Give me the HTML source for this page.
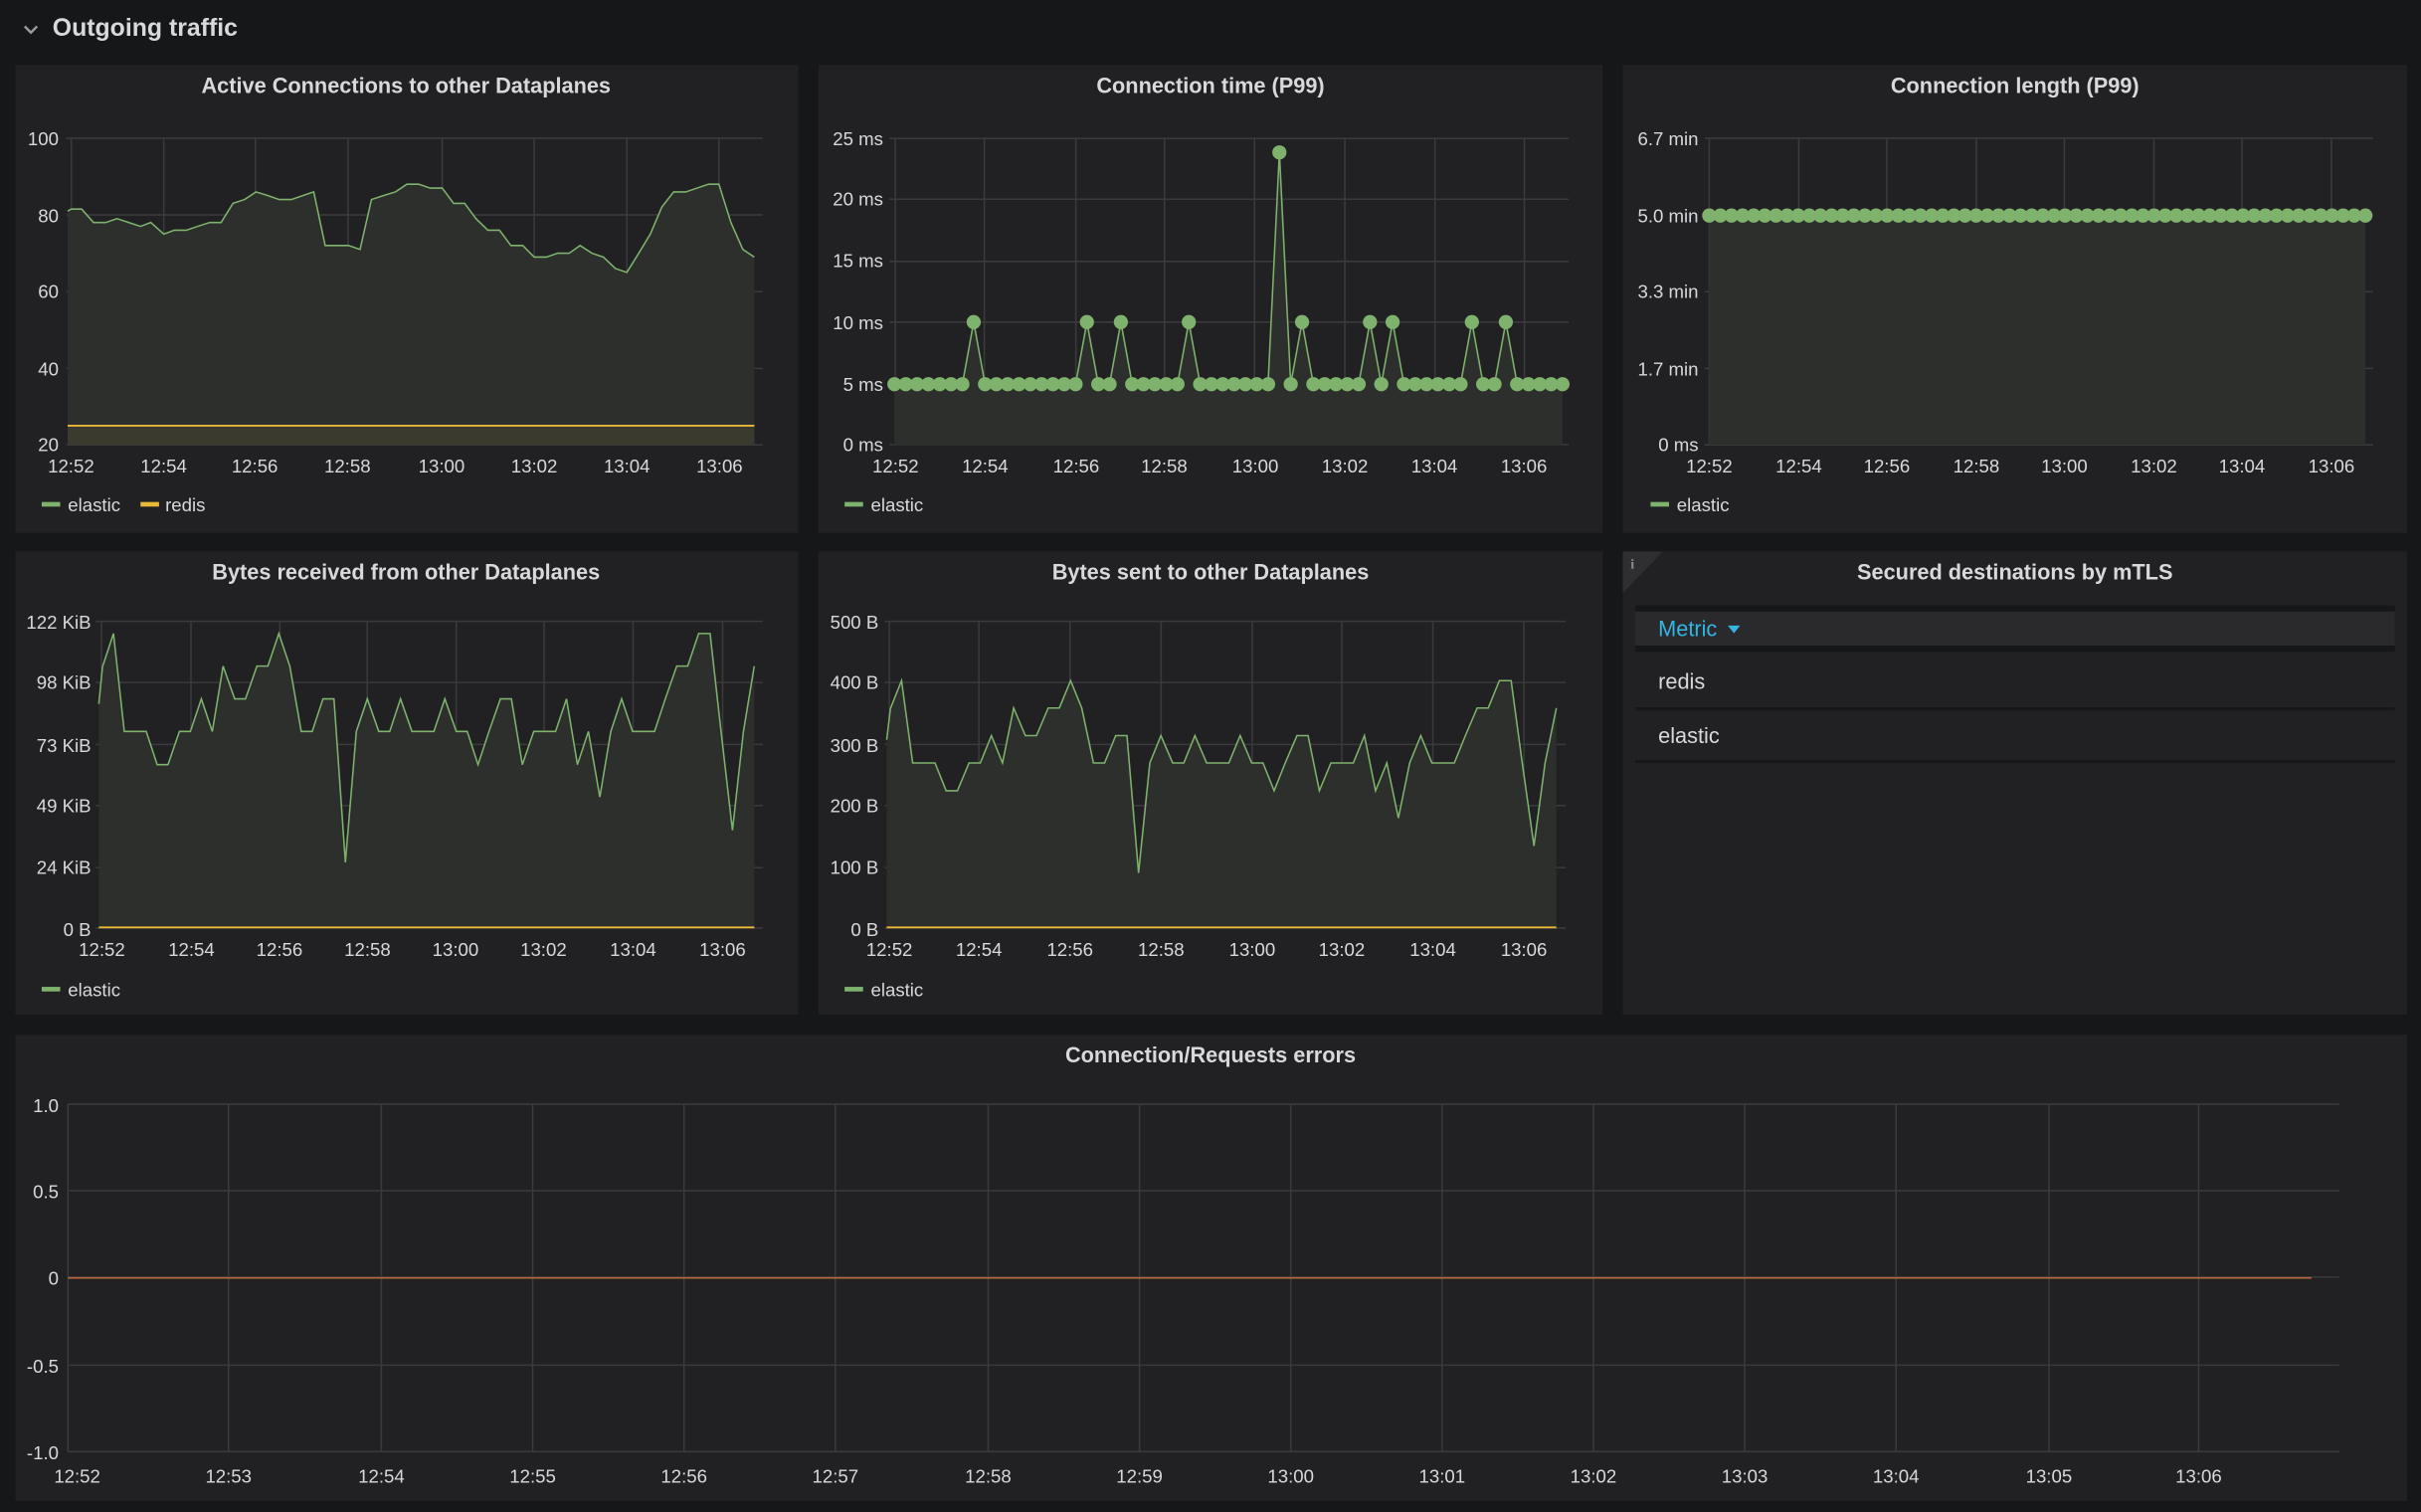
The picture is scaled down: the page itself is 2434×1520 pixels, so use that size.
<!DOCTYPE html>
<html><head><meta charset="utf-8"><style>
html,body{margin:0;padding:0;background:#161719;}
svg{display:block}
text{font-family:"Liberation Sans",sans-serif;fill:#d8d9da}
.t{font-weight:bold;font-size:14px;text-anchor:middle}
.ax{font-size:12px}
.r{text-anchor:end}
.m{text-anchor:middle}
</style></head><body>
<svg id="s" width="2434" height="1520" viewBox="0 0 1568 979" xmlns="http://www.w3.org/2000/svg">
<rect width="1568" height="979" fill="#161719"/>
<path d="M16 17 l4 4 l4 -4" stroke="#9a9a9c" stroke-width="1.6" fill="none"/>
<text x="34" y="23" style="font-size:16px;font-weight:bold">Outgoing traffic</text>

<rect x="10" y="42" width="507" height="303" fill="#212124"/>
<rect x="530" y="42" width="508" height="303" fill="#212124"/>
<rect x="1051" y="42" width="508" height="303" fill="#212124"/>
<rect x="10" y="357" width="507" height="300" fill="#212124"/>
<rect x="530" y="357" width="508" height="300" fill="#212124"/>
<rect x="1051" y="357" width="508" height="300" fill="#212124"/>
<rect x="10" y="670" width="1549" height="302" fill="#212124"/>

<g id="g"></g>

<text class="t" x="263" y="60">Active Connections to other Dataplanes</text>
<text class="t" x="784" y="60">Connection time (P99)</text>
<text class="t" x="1305" y="60">Connection length (P99)</text>
<text class="t" x="263" y="375">Bytes received from other Dataplanes</text>
<text class="t" x="784" y="375">Bytes sent to other Dataplanes</text>
<text class="t" x="1305" y="375">Secured destinations by mTLS</text>
<text class="t" x="784" y="688">Connection/Requests errors</text>

<g class="ax">
<text class="r" x="38" y="94">100</text><text class="r" x="38" y="144">80</text><text class="r" x="38" y="193">60</text><text class="r" x="38" y="243">40</text><text class="r" x="38" y="292">20</text>
<text class="m" x="46" y="306">12:52</text><text class="m" x="106" y="306">12:54</text><text class="m" x="165" y="306">12:56</text><text class="m" x="225" y="306">12:58</text><text class="m" x="286" y="306">13:00</text><text class="m" x="346" y="306">13:02</text><text class="m" x="406" y="306">13:04</text><text class="m" x="466" y="306">13:06</text>
<text x="44" y="331">elastic</text><text x="107" y="331">redis</text>

<text class="r" x="572" y="94">25 ms</text><text class="r" x="572" y="133">20 ms</text><text class="r" x="572" y="173">15 ms</text><text class="r" x="572" y="213">10 ms</text><text class="r" x="572" y="253">5 ms</text><text class="r" x="572" y="292">0 ms</text>
<text class="m" x="580" y="306">12:52</text><text class="m" x="638" y="306">12:54</text><text class="m" x="697" y="306">12:56</text><text class="m" x="754" y="306">12:58</text><text class="m" x="813" y="306">13:00</text><text class="m" x="871" y="306">13:02</text><text class="m" x="929" y="306">13:04</text><text class="m" x="987" y="306">13:06</text>
<text x="564" y="331">elastic</text>

<text class="r" x="1100" y="94">6.7 min</text><text class="r" x="1100" y="144">5.0 min</text><text class="r" x="1100" y="193">3.3 min</text><text class="r" x="1100" y="243">1.7 min</text><text class="r" x="1100" y="292">0 ms</text>
<text class="m" x="1107" y="306">12:52</text><text class="m" x="1165" y="306">12:54</text><text class="m" x="1222" y="306">12:56</text><text class="m" x="1280" y="306">12:58</text><text class="m" x="1337" y="306">13:00</text><text class="m" x="1395" y="306">13:02</text><text class="m" x="1452" y="306">13:04</text><text class="m" x="1510" y="306">13:06</text>
<text x="1086" y="331">elastic</text>

<text class="r" x="59" y="407">122 KiB</text><text class="r" x="59" y="446">98 KiB</text><text class="r" x="59" y="487">73 KiB</text><text class="r" x="59" y="526">49 KiB</text><text class="r" x="59" y="566">24 KiB</text><text class="r" x="59" y="606">0 B</text>
<text class="m" x="66" y="619">12:52</text><text class="m" x="124" y="619">12:54</text><text class="m" x="181" y="619">12:56</text><text class="m" x="238" y="619">12:58</text><text class="m" x="295" y="619">13:00</text><text class="m" x="352" y="619">13:02</text><text class="m" x="410" y="619">13:04</text><text class="m" x="468" y="619">13:06</text>
<text x="44" y="645">elastic</text>

<text class="r" x="569" y="407">500 B</text><text class="r" x="569" y="446">400 B</text><text class="r" x="569" y="487">300 B</text><text class="r" x="569" y="526">200 B</text><text class="r" x="569" y="566">100 B</text><text class="r" x="569" y="606">0 B</text>
<text class="m" x="576" y="619">12:52</text><text class="m" x="634" y="619">12:54</text><text class="m" x="693" y="619">12:56</text><text class="m" x="752" y="619">12:58</text><text class="m" x="811" y="619">13:00</text><text class="m" x="869" y="619">13:02</text><text class="m" x="928" y="619">13:04</text><text class="m" x="987" y="619">13:06</text>
<text x="564" y="645">elastic</text>

<text class="r" x="38" y="720">1.0</text><text class="r" x="38" y="776">0.5</text><text class="r" x="38" y="832">0</text><text class="r" x="38" y="889">-0.5</text><text class="r" x="38" y="945">-1.0</text>
<text class="m" x="50" y="960">12:52</text><text class="m" x="148" y="960">12:53</text><text class="m" x="247" y="960">12:54</text><text class="m" x="345" y="960">12:55</text><text class="m" x="443" y="960">12:56</text><text class="m" x="541" y="960">12:57</text><text class="m" x="640" y="960">12:58</text><text class="m" x="738" y="960">12:59</text><text class="m" x="836" y="960">13:00</text><text class="m" x="934" y="960">13:01</text><text class="m" x="1032" y="960">13:02</text><text class="m" x="1130" y="960">13:03</text><text class="m" x="1228" y="960">13:04</text><text class="m" x="1327" y="960">13:05</text><text class="m" x="1424" y="960">13:06</text>
</g>

<rect x="27" y="325" width="12" height="3" fill="#7eb26d"/>
<rect x="91" y="325" width="12" height="3" fill="#eab839"/>
<rect x="547" y="325" width="12" height="3" fill="#7eb26d"/>
<rect x="1069" y="325" width="12" height="3" fill="#7eb26d"/>
<rect x="27" y="639" width="12" height="3" fill="#7eb26d"/>
<rect x="547" y="639" width="12" height="3" fill="#7eb26d"/>

<polygon points="1051,357 1077,357 1051,384" fill="#2f2f32"/>
<text x="1056" y="368" style="font-size:9px;fill:#8e8e8e;font-family:'Liberation Serif',serif;font-weight:bold">i</text>
<rect x="1059" y="392" width="492" height="4" fill="#161719"/>
<rect x="1059" y="396" width="492" height="22" fill="#2a2a2d"/>
<rect x="1059" y="418" width="492" height="4" fill="#161719"/>
<rect x="1059" y="458" width="492" height="2" fill="#161719"/>
<rect x="1059" y="492" width="492" height="2" fill="#161719"/>
<text x="1074" y="412" style="font-size:14px;fill:#33b5e5">Metric</text>
<polygon points="1119,405 1127,405 1123,410" fill="#33b5e5"/>
<text x="1074" y="446" style="font-size:14px">redis</text>
<text x="1074" y="481" style="font-size:14px">elastic</text>
</svg>
<script>
var NS="http://www.w3.org/2000/svg",G=document.getElementById("g");
function el(t,a){var e=document.createElementNS(NS,t);for(var k in a)e.setAttribute(k,a[k]);G.appendChild(e);return e;}
var GC="#3a3a3c";
function hl(x1,x2,ys){ys.forEach(function(y){el("line",{x1:x1,x2:x2,y1:y,y2:y,stroke:GC,"stroke-width":1});});}
function vl(y1,y2,xs){xs.forEach(function(x){el("line",{x1:x,x2:x,y1:y1,y2:y2,stroke:GC,"stroke-width":1});});}
hl(43,494,[89.4,139.1,188.8,238.5,288]);vl(89,288,[46.2,106.1,165.4,225.4,286.4,346,406,465.6]);
var d1=[[130,81],[137,81.5],[157,81.5],[180,78],[203,78],[225,79],[270,77],[290,78],[315,75],[335,76],[358,76],[380,77],[403,78],[425,78],[448,83],[470,84],[492,86],[515,85],[537,84],[560,84],[582,85],[603,86],[625,72],[670,72],[692,71],[714,84],[737,85],[760,86],[782,88],[805,88],[827,87],[850,87],[872,83],[893,83],[915,79],[938,76],[960,76],[982,72],[1005,72],[1027,69],[1050,69],[1072,70],[1094,70],[1115,72],[1138,70],[1160,69],[1183,66],[1205,65],[1228,70],[1250,75],[1272,82],[1295,86],[1318,86],[1340,87],[1362,88],[1382,88],[1405,78],[1428,71],[1450,69]];
var p1=d1.map(function(p){return (p[0]/2.968).toFixed(1)+","+(337.65-2.4825*p[1]).toFixed(1);});
el("polygon",{points:"43.8,288 "+p1.join(" ")+" 488.6,288",fill:"#2c2f2b"});
el("rect",{x:43.8,y:275.6,width:444.8,height:12.4,fill:"#3b3a2e"});
el("polyline",{points:p1.join(" "),fill:"none",stroke:"#7eb26d","stroke-width":1});
el("line",{x1:43.8,x2:488.6,y1:275.6,y2:275.6,stroke:"#eab839","stroke-width":1.2});
hl(576,1016,[89.6,128.9,169.2,208.5,248.7,287.8]);vl(89,288,[579.9,637.5,696.8,754.2,812.5,871,929.4,987.3]);
var sp={7:208.5,17:208.5,20:208.5,26:208.5,34:98.6,36:208.5,42:208.5,44:208.5,51:208.5,54:208.5};
var p2=[];for(var i=0;i<60;i++){p2.push([579.3+i*7.333,sp[i]||248.7]);}
el("polygon",{points:"579.3,288 "+p2.map(function(p){return p.join(",")}).join(" ")+" 1012,288",fill:"#2c2f2b"});
el("polyline",{points:p2.map(function(p){return p.join(",")}).join(" "),fill:"none",stroke:"#7eb26d","stroke-width":1});
p2.forEach(function(p){el("circle",{cx:p[0],cy:p[1],r:4.6,fill:"#7eb26d"});});
hl(1104,1537,[89.4,139.1,188.8,238.5,288]);vl(89,288,[1107,1165,1222,1280,1337,1395,1452,1510]);
el("rect",{x:1107,y:139.5,width:425,height:148.5,fill:"#2c2f2b"});
el("line",{x1:1107,x2:1532,y1:139.5,y2:139.5,stroke:"#7eb26d","stroke-width":1});
for(var i=0;i<60;i++)el("circle",{cx:1107+i*425/59,cy:139.5,r:4.6,fill:"#7eb26d"});
var d4=[[190,322],[197,210],[218,110],[239,405],[281,405],[302,505],[323,505],[345,405],[366,405],[387,307],[408,405],[429,208],[451,307],[472,307],[494,208],[515,208],[536,110],[557,208],[579,405],[600,405],[621,307],[642,307],[664,800],[685,405],[706,307],[728,405],[749,405],[770,307],[792,405],[834,405],[855,307],[877,405],[898,405],[919,505],[940,405],[962,307],[983,307],[1004,505],[1026,405],[1068,405],[1089,307],[1110,505],[1131,405],[1153,603],[1174,405],[1195,307],[1216,405],[1258,405],[1279,307],[1301,208],[1322,208],[1343,110],[1365,110],[1386,405],[1408,703],[1429,405],[1450,208]];
function pan(fx,k){
 var pts=d4.map(function(p){var y=(600+p[1]/3)/1.552;y=601-(601-y)*k;return fx(p[0]/2.968).toFixed(1)+","+y.toFixed(1);});
 var x0=fx(190/2.968),x1=fx(1450/2.968);
 el("polygon",{points:x0+",601 "+pts.join(" ")+" "+x1+",601",fill:"#2c2f2b"});
 el("polyline",{points:pts.join(" "),fill:"none",stroke:"#7eb26d","stroke-width":1});
 el("line",{x1:x0,x2:x1,y1:600.5,y2:600.5,stroke:"#eab839","stroke-width":1.2});
}
hl(62,494,[402.3,441.9,482,521.6,561.8,600.9]);vl(402,601,[65.7,123.7,181.3,237.9,295.5,352.4,410,468]);
pan(function(x){return x;},1);
hl(573,1014,[402.3,441.9,482,521.6,561.8,600.9]);vl(402,601,[576,634,693,752,811,869,928,987]);
pan(function(x){return 576+(x-65.7)*1.0216;},0.84);
hl(44,1515,[715,771,827,884,940]);vl(715,940,[44,148,247,345,443,541,640,738,836,934,1032,1130,1228,1327,1424]);
el("line",{x1:44,x2:1497,y1:827.5,y2:827.5,stroke:"#b5693a","stroke-width":1});
</script>
</body></html>
